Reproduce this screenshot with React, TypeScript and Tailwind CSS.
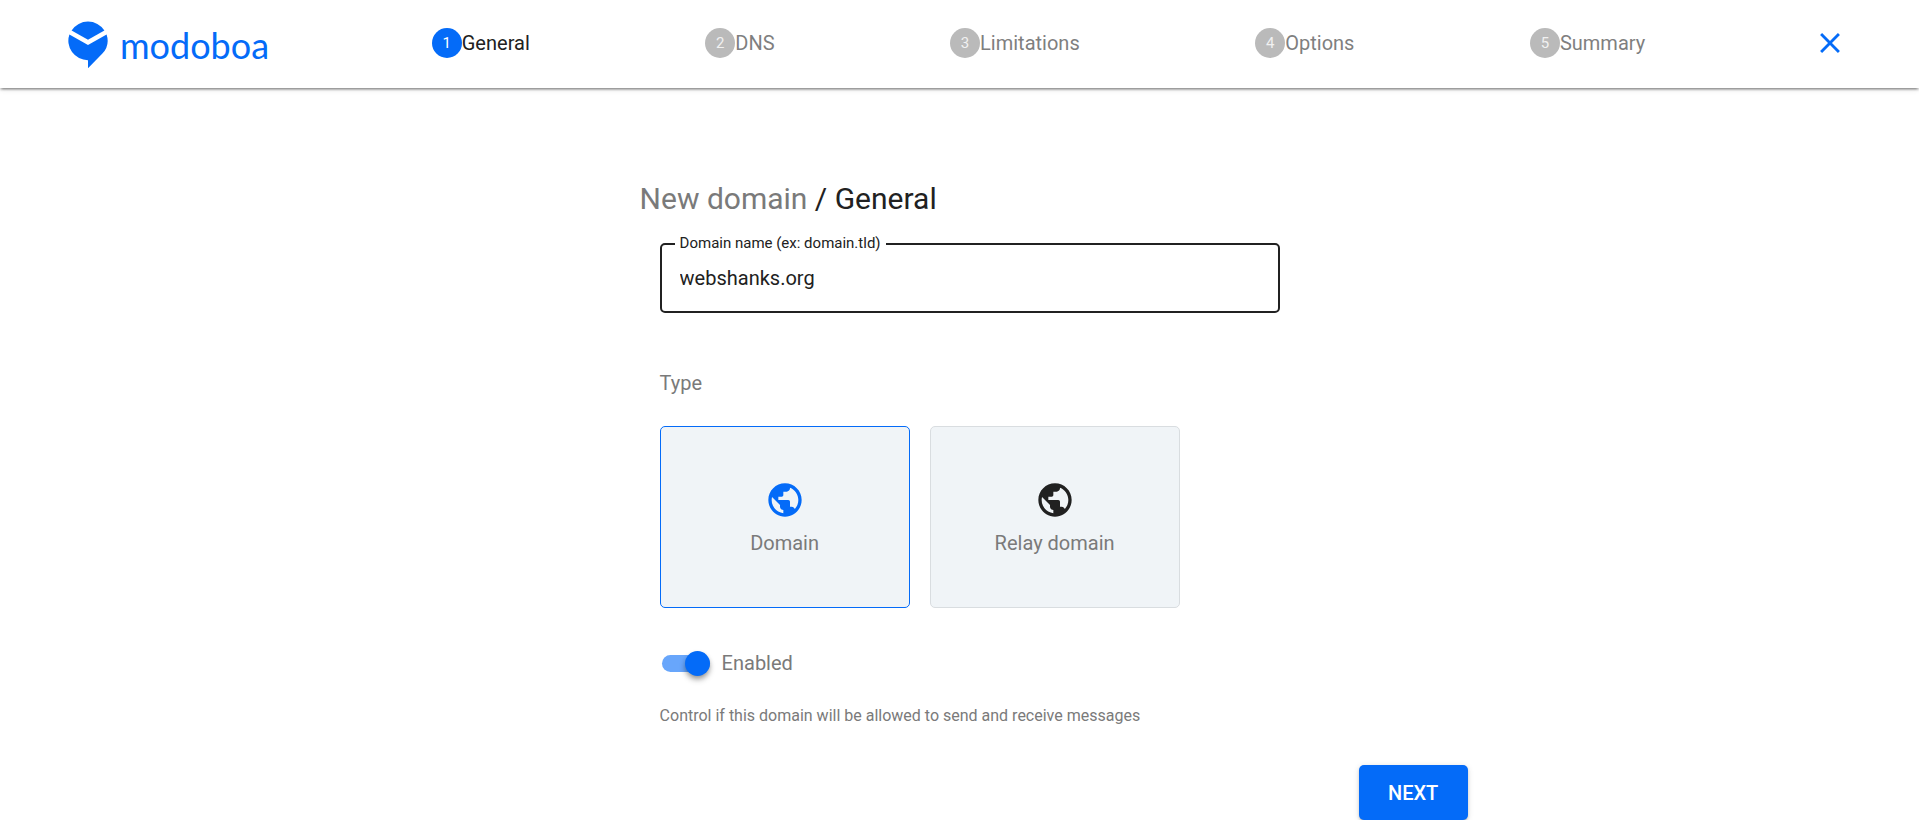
import React, { useState } from 'react';
import { MdClose, MdPublic } from 'react-icons/md';

const steps = ['General', 'DNS', 'Limitations', 'Options', 'Summary'];

const domainTypes = [
  { value: 'domain', label: 'Domain' },
  { value: 'relaydomain', label: 'Relay domain' },
];

const Logo = () => (
  <a href="#" className="flex items-center gap-3 text-[#046bf8]">
    <svg viewBox="0 0 40 48" className="h-12 w-10" fill="currentColor" aria-hidden="true">
      <path d="M3.6 9.4A19.6 19.6 0 0 1 36.4 9.4L20 18.8Z" />
      <path d="M1.4 13.4 20 24 38.6 13.4A19.5 19.5 0 0 1 34.4 32.6L20 47.2V39.2A19.5 19.5 0 0 1 1.4 13.4Z" />
    </svg>
    <span className="font-['Lato',sans-serif] text-4xl leading-10">modoboa</span>
  </a>
);

const Stepper = ({ current }: { current: number }) => (
  <ol className="flex flex-1 items-center justify-around">
    {steps.map((step, index) => (
      <li
        key={step}
        className={`flex items-center text-xl ${index === current ? 'text-[#212121]' : 'text-[#7f7f7f]'}`}
      >
        <span
          className={`flex size-[30px] items-center justify-center rounded-full text-[15px] ${
            index === current ? 'bg-[#046bf8] text-white' : 'bg-[#bababa] text-[#f1f1f1]'
          }`}
        >
          {index + 1}
        </span>
        {step}
      </li>
    ))}
  </ol>
);

const App = () => {
  const [name, setName] = useState('webshanks.org');
  const [type, setType] = useState('domain');
  const [enabled, setEnabled] = useState(true);

  return (
    <div className="bg-white font-['Roboto',sans-serif] text-[#212121]">
      <header className="flex h-[88px] items-center pb-0.5 shadow-[0_3px_2px_-2px_rgba(0,0,0,0.3),0_2px_2px_0_rgba(0,0,0,0.18),0_1px_6px_0_rgba(0,0,0,0.12)]">
        <div className="w-[344px] pt-1 pl-[68px]">
          <Logo />
        </div>
        <Stepper current={0} />
        <div className="flex w-[186px] justify-center pl-2">
          <button type="button" aria-label="Close" className="text-[#046bf8]">
            <MdClose className="size-[34px]" />
          </button>
        </div>
      </header>

      <main className="ml-[33.33%] max-w-[828px] pt-[91px]">
        <h1 className="text-3xl leading-10">
          <span className="text-[#7a7a7a]">New domain</span> / General
        </h1>
        <form className="pl-5" onSubmit={(e) => e.preventDefault()}>
          <div className="relative mt-6 max-w-[620px]">
            <label
              htmlFor="domain-name"
              className="absolute -top-2.5 left-[15px] bg-white px-[5px] text-[15px] leading-5"
            >
              Domain name (ex: domain.tld)
            </label>
            <input
              id="domain-name"
              type="text"
              value={name}
              onChange={(e) => setName(e.target.value)}
              className="h-[70px] w-full rounded-[5px] border-2 border-[#212121] px-[18px] text-xl outline-none"
            />
          </div>

          <fieldset className="mt-[55px]">
            <legend className="text-xl leading-[30px] text-[#7a7a7a]">Type</legend>
            <div className="mt-7 flex gap-5">
              {domainTypes.map((item) => (
                <label
                  key={item.value}
                  className={`relative flex h-[182px] w-[250px] cursor-pointer flex-col items-center justify-center rounded-[5px] border bg-[#f0f4f7] pt-[3px] ${
                    type === item.value ? 'border-[#046bf8]' : 'border-[#d9dde0]'
                  }`}
                >
                  <input
                    type="radio"
                    name="type"
                    value={item.value}
                    checked={type === item.value}
                    onChange={() => setType(item.value)}
                    className="sr-only"
                  />
                  <MdPublic
                    className={`size-10 ${type === item.value ? 'text-[#046bf8]' : 'text-[#212121]'}`}
                  />
                  <span className="mt-2 text-xl leading-[30px] text-[#7a7a7a]">{item.label}</span>
                </label>
              ))}
            </div>
          </fieldset>

          <label className="relative mt-10 flex w-fit cursor-pointer items-center gap-3 text-xl leading-[30px] text-[#7a7a7a]">
            <input
              type="checkbox"
              role="switch"
              checked={enabled}
              onChange={(e) => setEnabled(e.target.checked)}
              className="peer sr-only"
            />
            <span className="ml-0.5 flex h-[17px] w-12 items-center rounded-full bg-[#bababa] peer-checked:justify-end peer-checked:bg-[#68a6fb]">
              <span className="size-[25px] rounded-full bg-[#046bf8] shadow-[0_3px_5px_-1px_rgba(0,0,0,0.3),0_4px_6px_0_rgba(0,0,0,0.2)]" />
            </span>
            Enabled
          </label>
          <p className="mt-[25px] text-base leading-[25px] text-[#7a7a7a]">
            Control if this domain will be allowed to send and receive messages
          </p>

          <div className="mt-[37px] flex justify-end">
            <button
              type="submit"
              className="h-[55px] w-[109px] rounded-[5px] bg-[#046bf8] text-xl font-medium text-white shadow-[0_4px_2px_-2px_rgba(0,0,0,0.2),0_2px_3px_0_rgba(0,0,0,0.14),0_1px_6px_0_rgba(0,0,0,0.12)]"
            >
              NEXT
            </button>
          </div>
        </form>
      </main>
    </div>
  );
};

export default App;
